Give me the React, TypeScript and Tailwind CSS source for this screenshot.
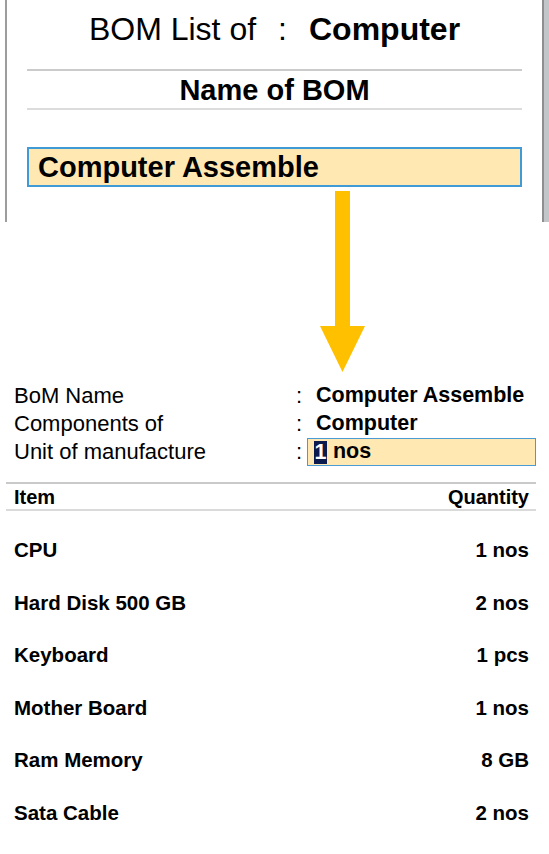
import React from 'react'

const items = [
  { name: 'CPU', qty: '1 nos' },
  { name: 'Hard Disk 500 GB', qty: '2 nos' },
  { name: 'Keyboard', qty: '1 pcs' },
  { name: 'Mother Board', qty: '1 nos' },
  { name: 'Ram Memory', qty: '8 GB' },
  { name: 'Sata Cable', qty: '2 nos' },
]

const DownArrow: React.FC = () => (
  <svg className="absolute left-[320px] top-[191px]" width="45" height="182" viewBox="0 0 45 182">
    <rect x="15" y="0" width="15" height="136" fill="#FFC000" />
    <polygon points="0,135 45,135 22.5,181" fill="#FFC000" />
  </svg>
)

const App: React.FC = () => {
  return (
    <div className="relative w-[549px] h-[854px] overflow-hidden bg-white text-black font-['Liberation_Sans',Arial,sans-serif]">
      {/* BOM list panel */}
      <div className="ml-[5px] h-[222px] border-r-[5px] border-[#c3c6c9]">
        <div className="h-full border-l-2 border-r-2 border-l-[#9d9d9d] border-r-[#8f8f8f] px-[20px] pt-[13px]">
          <div className="flex justify-center items-baseline text-[32px] leading-[32px]">
            <span>BOM List of</span>
            <span className="ml-[22px]">:</span>
            <span className="ml-[22px] font-bold">Computer</span>
          </div>
          <div className="mt-[24px] h-[2px] bg-[#cbcbcb]" />
          <div className="pt-[6px] pb-[4px] text-center text-[29px] leading-[27px] font-bold">Name of BOM</div>
          <div className="h-[2px] bg-[#dcdcdc]" />
          <div className="mt-[37px] h-[40px] border-2 border-[#3f9ad6] bg-[#ffe8b2] pl-[9px] text-[29px] leading-[36px] font-bold">
            Computer Assemble
          </div>
        </div>
      </div>

      <DownArrow />

      {/* BoM details */}
      <div className="ml-[6px] mt-[160px] w-[530px]">
        <div className="pl-[8px] text-[22px] leading-none">
          <div className="flex h-[28px] items-center">
            <div className="w-[282px]">BoM Name</div>
            <div className="w-[11px]">:</div>
            <div className="pl-[9px] text-[21.5px] font-bold">Computer Assemble</div>
          </div>
          <div className="flex h-[28px] items-center">
            <div className="w-[282px]">Components of</div>
            <div className="w-[11px]">:</div>
            <div className="pl-[9px] text-[21.5px] font-bold">Computer</div>
          </div>
          <div className="flex h-[28px] items-center">
            <div className="w-[282px]">Unit of manufacture</div>
            <div className="w-[11px]">:</div>
            <div className="flex h-[28px] flex-1 items-center border border-[#4a9bd5] bg-[#ffe8b2] pl-[6px] text-[21.5px] font-bold">
              <span className="bg-[#0c1b4d] px-[0.5px] leading-[23px] text-white">1</span>
              <span className="ml-[6px]">nos</span>
            </div>
          </div>
        </div>

        <div className="mt-[16px] h-[2px] bg-[#c9c9c9]" />
        <div className="flex h-[25px] items-center justify-between pl-[8px] pr-[7px] text-[20px] leading-none font-bold">
          <span>Item</span>
          <span>Quantity</span>
        </div>
        <div className="h-[2px] bg-[#dadada]" />

        <div className="pt-[13px] pl-[8px] pr-[7px] text-[20.5px] leading-none font-bold">
          {items.map((item) => (
            <div key={item.name} className="flex h-[52.5px] items-center justify-between">
              <span>{item.name}</span>
              <span>{item.qty}</span>
            </div>
          ))}
        </div>
      </div>
    </div>
  )
}

export default App
